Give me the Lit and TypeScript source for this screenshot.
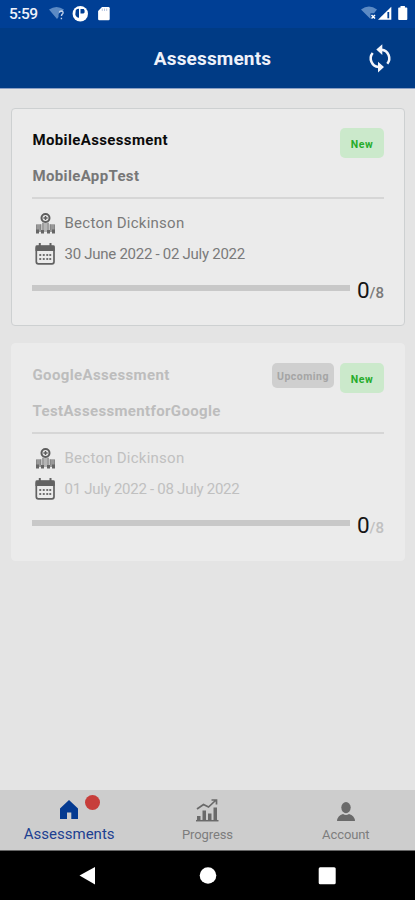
import { LitElement, html, css, svg, nothing } from "lit";
import { customElement, property } from "lit/decorators.js";
import { classMap } from "lit/directives/class-map.js";

@customElement("status-bar")
class StatusBar extends LitElement {
  static styles = css`
    :host { display: flex; height: 28px; background: #003f95; color: #eef2fb; align-items: center; }
    .time { font-size: 15.5px; font-weight: 500; margin-left: 9px; width: 40px; line-height: 28px; letter-spacing: -0.5px; }
    .left { width: 62px; height: 28px; }
    .right { width: 55px; height: 28px; margin-left: auto; margin-right: 5px; }
    svg { display: block; }
  `;
  render() {
    return html`
      <span class="time">5:59</span>
      <svg class="left" viewBox="49 0 62 28">
        <path d="M49 9.5Q56.500 4.500 64 9.500L62 12Q58 12 58.500 17L57 19Z" fill="#5c8ac4" />
        <path d="M59.300 12.500Q59.800 11 61.300 11Q63.400 11.200 63 13.200Q61.500 14.500 61.400 16M61.400 17.800V19.300" fill="none" stroke="#c3d3ea" stroke-width="1.400" />
        <circle cx="80.300" cy="13.700" r="7.700" fill="#fff" />
        <path d="M75.800 10Q77 8.800 79 8.800V17.800Q76 17.500 75.300 14.500ZM80.500 9H83.800Q85 10 84.600 12.500L83.500 13.600H80.500Z" fill="#003f95" />
        <path d="M102 7H108.500Q109.700 7 109.700 8.200V19Q109.700 20.200 108.500 20.200H99.300Q98.100 20.200 98.100 19V11Z" fill="#fff" />
        <path d="M102.300 8.500V11M104.500 8.500V11M106.700 8.500V11" stroke="#b9c8e2" stroke-width="1" />
      </svg>
      <svg class="right" viewBox="355 0 55 28">
        <path d="M361 9.500Q369 3.500 377 9.500L374 13.300H370.500V19Z" fill="#5c8ac4" />
        <path d="M371.500 15L375 18.500M375 15L371.500 18.500" stroke="#fff" stroke-width="1.500" />
        <path d="M391.300 6.800V19.700H378Z" fill="#fff" />
        <path d="M388.300 12V18.300" stroke="#003f95" stroke-width="1.800" />
        <path d="M400.500 6H404.900V7.500H406.500Q407.300 7.500 407.300 8.300V19Q407.300 20 406.500 20H399Q398.200 20 398.200 19V8.300Q398.200 7.500 399 7.500H400.500Z" fill="#fff" />
      </svg>
    `;
  }
}

@customElement("assessment-card")
class AssessmentCard extends LitElement {
  @property() name = "";
  @property() group = "";
  @property() dates = "";
  @property({ type: Boolean }) upcoming = false;

  static styles = css`
    :host { display: block; }
    .card { box-sizing: border-box; height: 218px; background: #ebebeb; border: 1px solid #cdd0d1; border-radius: 4px; padding: 19px 20px 0; color: #7a7a7a; }
    .card.dim { border-color: #ebebeb; color: #c0c0c0; }
    .top { display: flex; align-items: flex-start; height: 31px; }
    .name { flex: 1; font-weight: 700; font-size: 15px; line-height: 24px; color: #0b0b0b; letter-spacing: 0.36px; padding-left: 0.5px; }
    .dim .name, .dim .group { color: #bdbdbd; }
    .tag { box-sizing: border-box; border-radius: 5px; font-weight: 700; font-size: 10.5px; text-align: center; letter-spacing: 0.5px; }
    .new { width: 44px; height: 30px; line-height: 33px; background: #cbe9cb; color: #27ac2b; margin-left: 6px; }
    .soon { width: 62px; height: 25px; line-height: 28px; background: #cfcfcf; color: #a5a5a5; }
    .group { height: 38px; line-height: 35px; font-weight: 700; font-size: 15px; color: #777; letter-spacing: 0.35px; padding-left: 0.5px; }
    .rule { height: 2px; background: #d6d6d6; margin-bottom: 9px; }
    .row { display: flex; align-items: center; height: 31px; font-size: 15px; line-height: 31px; letter-spacing: 0.25px; }
    .row svg { width: 22px; height: 24px; margin: 0 8.5px 0 2px; }
    .date { letter-spacing: -0.27px; }
    .progress { display: flex; height: 36px; }
    .bar { width: 318px; height: 6px; background: #c8c8c8; margin-top: 15px; }
    .count { display: flex; align-items: baseline; margin-left: 7.5px; line-height: 40px; }
    .done { font-size: 22.500px; color: #151515; width: 12.5px; }
    .total { font-size: 15px; font-weight: 500; }
  `;

  render() {
    return html`
      <div class=${classMap({ card: true, dim: this.upcoming })}>
        <div class="top">
          <span class="name">${this.name}</span>
          ${this.upcoming ? html`<span class="tag soon">Upcoming</span>` : nothing}
          <span class="tag new">New</span>
        </div>
        <div class="group">${this.group}</div>
        <div class="rule"></div>
        <div class="row">
          <svg viewBox="0 0 22 24">
            <path d="M2 12.300H7.500V20H2ZM15.500 12.300H21V20H15.500Z" fill="#999" />
            <path d="M8 10.500H15V20H8Z" fill="#b5b5b5" />
            <path d="M2.500 13V18M6.500 12.500V18M16.500 12.500V18M20.500 13V18M9 11V18M14 11V18" stroke="#888" fill="none" />
            <path d="M2 17.500H5V21.500H2ZM7 18H10V21.500H7ZM13 18H16V21.500H13ZM18 17.500H21V21.500H18Z" fill="#666" />
            <circle cx="11.500" cy="6" r="4" fill="#ebebeb" stroke="#5e5e5e" stroke-width="2" />
            <path d="M11.500 3.900V8.100M9.400 6H13.600" stroke="#5e5e5e" stroke-width="1.400" />
          </svg>
          <span>Becton Dickinson</span>
        </div>
        <div class="row date">
          <svg viewBox="0 0 22 24">
            <rect x="2.300" y="3.500" width="17.700" height="17.300" rx="2" fill="#ebebeb" stroke="#626262" stroke-width="1.700" />
            <path d="M1.500 3.500Q1.500 2.200 2.800 2.200H19.500Q20.800 2.200 20.800 3.500V8H1.500Z" fill="#626262" />
            <path d="M5.800 0V4M16.500 0V4" stroke="#626262" stroke-width="2" />
            <path d="M5.300 12H7.200M8.800 12H10.700M12.300 12H14.200M15.300 12H17.200M5.300 16H7.200M8.800 16H10.700M12.300 16H14.200M15.300 16H17.200" stroke="#707070" stroke-width="1.900" />
          </svg>
          <span>${this.dates}</span>
        </div>
        <div class="progress">
          <div class="bar"></div>
          <div class="count"><span class="done">0</span><span class="total">/8</span></div>
        </div>
      </div>
    `;
  }
}

const homeIcon = svg`<path d="M0 8.500L9 0L18 8.500V19H11.300V12.500H7V19H0Z" transform="translate(3 3)" fill="#043a91"/>`;
const chartIcon = svg`
  <path d="M1 23.700H23.500" stroke="#6a6a6a" stroke-width="1.500"/>
  <path d="M2 19H5.500V23H2ZM7.500 13.500H11V23H7.500ZM13 16.500H16.500V23H13ZM18.500 10.500H22V23H18.500Z" fill="#6a6a6a"/>
  <path d="M2 12L8.500 7.500L13.500 10L20.500 3.500M16.500 3H21.500V7.500" fill="none" stroke="#6a6a6a" stroke-width="1.700"/>`;
const personIcon = svg`
  <ellipse cx="12" cy="10.600" rx="4.700" ry="5.600" fill="#6a6a6a"/>
  <path d="M3 24Q3.500 18.500 9 17Q12 19 15 17Q20.500 18.500 21 24Z" fill="#6a6a6a"/>`;

@customElement("app-root")
class AppRoot extends LitElement {
  static styles = css`
    :host { display: flex; flex-direction: column; width: 415px; height: 900px; overflow: hidden; background: #e4e4e4; font-family: Roboto, "Liberation Sans", sans-serif; }
    header { display: grid; grid-template-columns: 60px 1fr 60px; height: 60px; background: #003b85; border-bottom: 1px solid #8b9fc4; align-items: center; margin-bottom: 19px; }
    h1 { grid-column: 2; margin: 0; text-align: center; font-size: 19px; font-weight: 700; color: #eef1fa; line-height: 62px; letter-spacing: 0.15px; padding-left: 10px; }
    .sync { width: 28px; height: 30px; margin-left: 11px; margin-top: -3px; }
    main { flex: 1; display: flex; flex-direction: column; gap: 17px; padding: 0 10px 0 11px; }
    nav { display: grid; grid-template-columns: repeat(3, 1fr); height: 60px; background: #cdcdcd; }
    .tab { display: flex; flex-direction: column; align-items: center; padding-top: 7px; box-sizing: border-box; font-size: 13px; color: #7d7d7d; letter-spacing: -0.1px; }
    .tab svg { display: block; width: 24px; height: 26px; }
    .tab span { line-height: 23px; }
    .active { color: #203f91; font-size: 15px; letter-spacing: 0; }
    .active span { line-height: 22px; }
    .icon { position: relative; height: 26px; }
    .dot { position: absolute; left: 27.5px; top: -2.5px; width: 15.5px; height: 15.5px; border-radius: 50%; background: #c73e3b; }
    footer { height: 50px; background: #000; border-top: 1px solid #666; box-sizing: border-box; }
    footer svg { display: block; width: 415px; height: 49px; }
  `;

  render() {
    return html`
      <status-bar></status-bar>
      <header>
        <h1>Assessments</h1>
        <svg class="sync" viewBox="0 0 28 30">
          <path d="M15.500 6.800A8.600 8.600 0 0 1 21.300 20.800M12.500 24A8.600 8.600 0 0 1 6.700 10" fill="none" stroke="#f3f5fb" stroke-width="2.500" />
          <path d="M16.300 1.200V12L10.300 6.600ZM12 18.800V29.500L18 24.100Z" fill="#f3f5fb" />
        </svg>
      </header>
      <main>
        <assessment-card name="MobileAssessment" group="MobileAppTest" dates="30 June 2022 - 02 July 2022"></assessment-card>
        <assessment-card name="GoogleAssessment" group="TestAssessmentforGoogle" dates="01 July 2022 - 08 July 2022" upcoming></assessment-card>
      </main>
      <nav>
        <div class="tab active"><div class="icon"><svg viewBox="0 0 24 26">${homeIcon}</svg><i class="dot"></i></div><span>Assessments</span></div>
        <div class="tab"><div class="icon"><svg viewBox="0 0 24 26">${chartIcon}</svg></div><span>Progress</span></div>
        <div class="tab"><div class="icon"><svg viewBox="0 0 24 26">${personIcon}</svg></div><span>Account</span></div>
      </nav>
      <footer>
        <svg viewBox="0 851 415 49">
          <path d="M79.500 875.500L95 867V884.500Z" fill="#fff" />
          <circle cx="208" cy="875.500" r="8.300" fill="#fff" />
          <rect x="318.700" y="867.300" width="17" height="17" rx="1.500" fill="#fff" />
        </svg>
      </footer>
    `;
  }
}
